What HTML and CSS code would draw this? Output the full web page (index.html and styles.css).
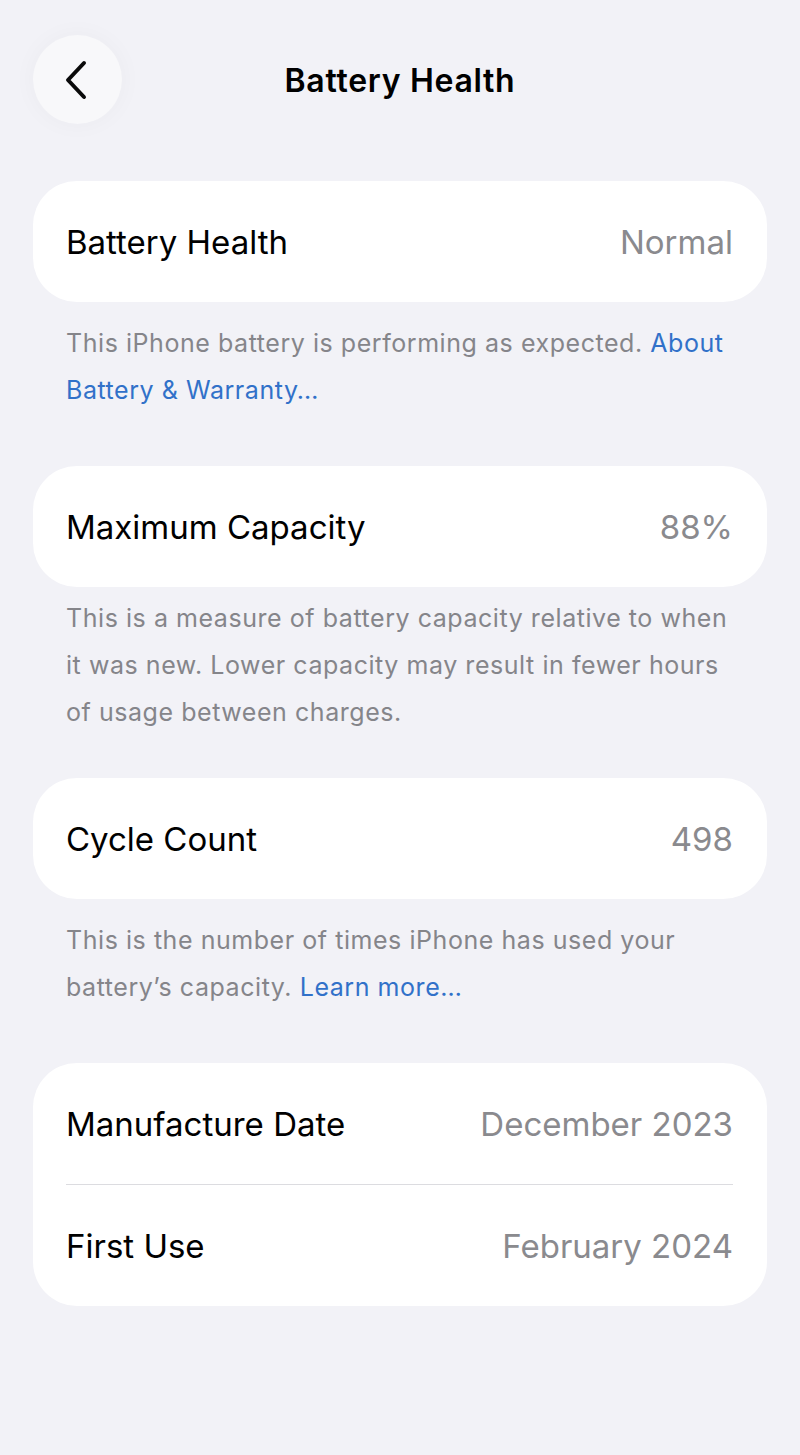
FILE: index.html
```html
<!DOCTYPE html>
<html lang="en">
<head>
  <meta charset="UTF-8">
  <title>Battery Health</title>
  <link rel="stylesheet" href="styles.css">
</head>
<body>

  <div class="page">
    <div class="nav-bar">
      <div class="back-btn">
        <svg width="26" height="40" viewBox="0 0 26 40">
          <path d="M21 3 L5 20 L21 37" fill="none" stroke="#0a0a0a" stroke-width="4" stroke-linecap="round" stroke-linejoin="round"/>
        </svg>
      </div>
      <div class="nav-title">Battery Health</div>
      <div></div>
    </div>

    <div class="card">
      <div class="row">
        <span class="label">Battery Health</span>
        <span class="value">Normal</span>
      </div>
    </div>
    <p class="note">This iPhone battery is performing as expected. <a href="#">About Battery &amp; Warranty…</a></p>

    <div class="card">
      <div class="row">
        <span class="label">Maximum Capacity</span>
        <span class="value">88%</span>
      </div>
    </div>
    <p class="note tight">This is a measure of battery capacity relative to when it was new. Lower capacity may result in fewer hours of usage between charges.</p>

    <div class="card">
      <div class="row">
        <span class="label">Cycle Count</span>
        <span class="value">498</span>
      </div>
    </div>
    <p class="note">This is the number of times iPhone has used your battery’s capacity. <a href="#">Learn more…</a></p>

    <div class="card">
      <div class="row">
        <span class="label">Manufacture Date</span>
        <span class="value">December 2023</span>
      </div>
      <div class="row">
        <span class="label">First Use</span>
        <span class="value">February 2024</span>
      </div>
    </div>
  </div>

</body>
</html>
```

FILE: styles.css
```css
html, body {
  margin: 0px;
  padding: 0px;
}
body {
  background-color: #f2f2f7;
  font-family: Inter, "Noto Sans", sans-serif;
  color: #000;
  min-height: 1455px;
}
.page {
  padding: 35px 33px 0 33px;
}
.nav-bar {
  display: grid;
  grid-template-columns: 1fr auto 1fr;
  align-items: center;
  margin-bottom: 57px;
}
.back-btn {
  width: 89px;
  height: 89px;
  border-radius: 50%;
  background-color: #f8f8fa;
  box-shadow: 0 0 24px rgba(0,0,0,0.035);
  display: flex;
  align-items: center;
  justify-content: center;
}
.back-btn svg {
  margin-left: -3px;
}
.nav-title {
  font-size: 32px;
  font-weight: 600;
  letter-spacing: 0.7px;
  padding-top: 2px;
}
.card {
  background-color: #fff;
  border-radius: 44px;
  padding: 0 34px 0 33px;
}
.row {
  display: flex;
  justify-content: space-between;
  align-items: center;
  height: 121px;
  font-size: 33px;
}
.row + .row {
  border-top: 1.5px solid #dcdce0;
}
.value {
  color: #8a8a8e;
}
.note {
  margin: 0 0 52px 0;
  padding: 18px 33px 0 33px;
  font-size: 25px;
  line-height: 47px;
  color: #85858a;
  letter-spacing: 0.55px;
}
.note.tight {
  padding-top: 8px;
  margin-bottom: 42px;
}
.note a {
  color: #3171c9;
  text-decoration: none;
}
```
